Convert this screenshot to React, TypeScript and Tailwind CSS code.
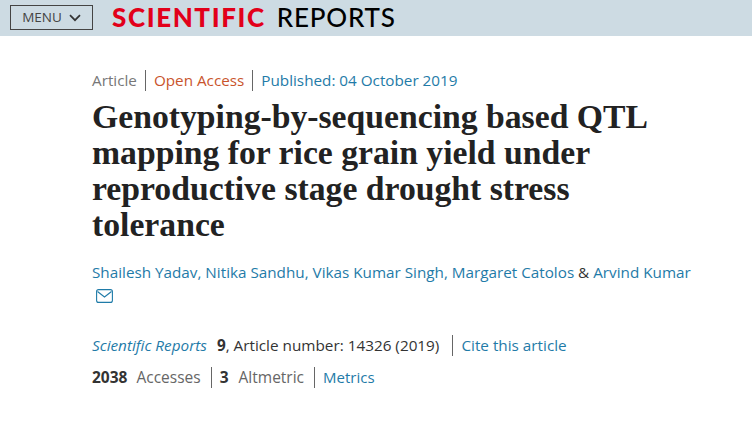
export default function App() {
  const sans = "font-['Open_Sans','Noto_Sans',sans-serif]";
  const link = "text-[#1f7ba8]";
  const sep = "border-l border-[#666] h-[21px] mx-2";
  const sepWide = "border-l border-[#666] h-[21px] ml-[10px] mr-[8px]";
  return (
    <div className={`w-[752px] h-[423px] bg-white overflow-hidden ${sans} text-[15.25px] text-[#333]`}>
      <header className="h-9 bg-[#cddbe3] flex items-center pl-[10px]">
        <div className="w-[83px] h-[25px] border border-[#444] flex items-center justify-center gap-[7px] text-[13.5px] text-[#444] mb-[1px]">
          <span>MENU</span>
          <svg width="12" height="8" viewBox="0 0 12 8" fill="none" stroke="#333" strokeWidth="1.7"><path d="M1 1.2 6 6.2 11 1.2" /></svg>
        </div>
        <div className="ml-[19px] text-[26px] leading-none flex items-center gap-[11px] mb-[3px] font-['Lato',sans-serif]">
          <span className="font-black text-[#e2001a] tracking-[1.6px]">SCIENTIFIC</span>
          <span className="text-black font-medium tracking-[0.8px]">REPORTS</span>
        </div>
      </header>
      <main className="pl-[92px] pt-[34px]">
        <div className="flex items-center h-[21px]">
          <span className="text-[#777]">Article</span>
          <span className={sep} />
          <span className="text-[#c9542c]">Open Access</span>
          <span className={sep} />
          <span className={link}>Published: 04 October 2019</span>
        </div>
        <h1 className="mt-[8px] font-['Liberation_Serif',serif] font-bold text-[33.7px] leading-[36px] text-[#222] w-[600px]">
          Genotyping-by-sequencing based QTL mapping for rice grain yield under reproductive stage drought stress tolerance
        </h1>
        <div className="mt-[18px] h-[22px] leading-[22px] whitespace-nowrap">
          <span className={link}>Shailesh Yadav, Nitika Sandhu, Vikas Kumar Singh, Margaret Catolos</span>
          <span> &amp; </span>
          <span className={link}>Arvind Kumar</span>
        </div>
        <div className="mt-[6px] pl-[4px] h-4">
          <svg width="17" height="14" viewBox="0 0 17 14" fill="none" stroke="#1f7ba8" strokeWidth="1.1"><rect x="0.6" y="0.6" width="15.8" height="12.8" rx="2" /><path d="M1.5 2.5 8.5 8 15.5 2.5" /></svg>
        </div>
        <div className="mt-[30px] flex items-center h-[21px] whitespace-pre text-[15.3px]">
          <span className={`${link} italic`}>Scientific Reports</span>
          <span className="ml-[10px] font-bold">9</span>
          <span>, Article number: 14326 (2019)</span>
          <span className="border-l border-[#666] h-[21px] ml-[13px] mr-[8px]" />
          <span className={link}>Cite this article</span>
        </div>
        <div className="mt-[11px] flex items-center h-[21px] text-[15.5px]">
          <span className="font-bold">2038</span>
          <span className="ml-[9px] text-[#666]">Accesses</span>
          <span className={sepWide} />
          <span className="font-bold">3</span>
          <span className="ml-[10px] text-[#666]">Altmetric</span>
          <span className={sepWide} />
          <span className={`${link} text-[15px]`}>Metrics</span>
        </div>
      </main>
    </div>
  );
}
